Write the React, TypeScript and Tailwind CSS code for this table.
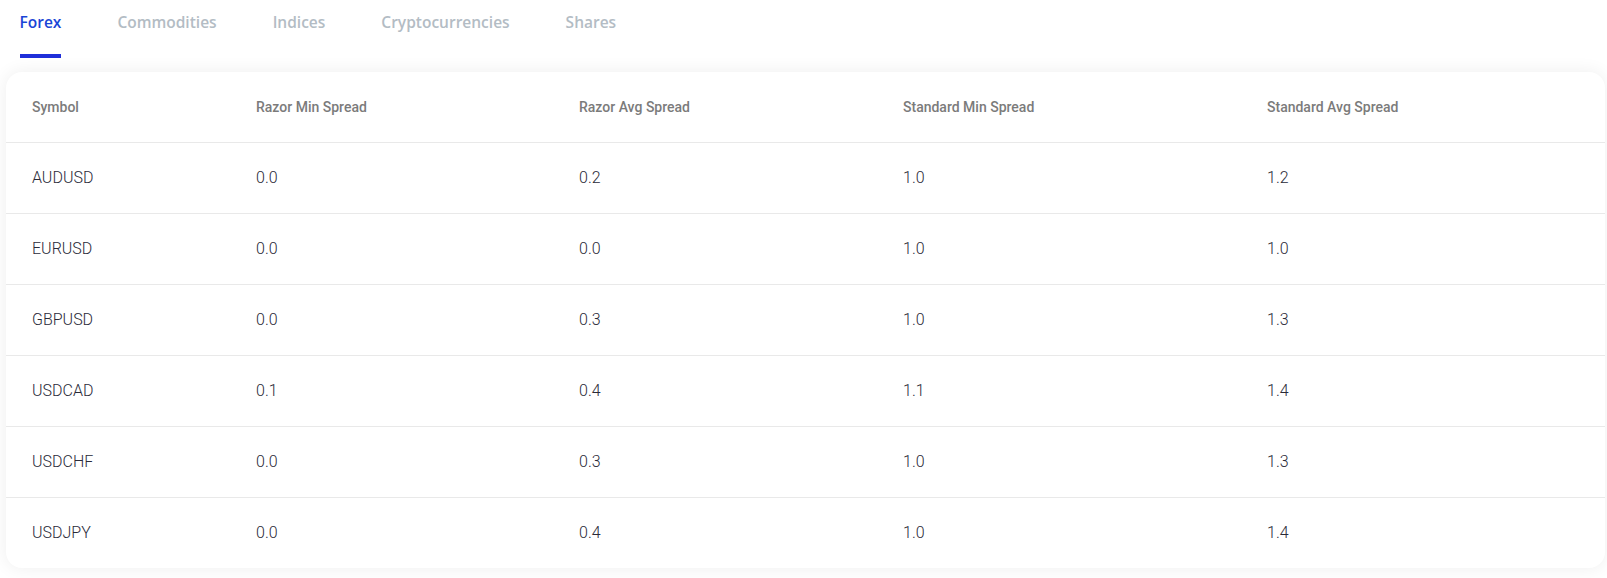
import { useState } from 'react';

const tabs = ['Forex', 'Commodities', 'Indices', 'Cryptocurrencies', 'Shares'];

const headers = ['Symbol', 'Razor Min Spread', 'Razor Avg Spread', 'Standard Min Spread', 'Standard Avg Spread'];

const rows = [
  ['AUDUSD', '0.0', '0.2', '1.0', '1.2'],
  ['EURUSD', '0.0', '0.0', '1.0', '1.0'],
  ['GBPUSD', '0.0', '0.3', '1.0', '1.3'],
  ['USDCAD', '0.1', '0.4', '1.1', '1.4'],
  ['USDCHF', '0.0', '0.3', '1.0', '1.3'],
  ['USDJPY', '0.0', '0.4', '1.0', '1.4'],
];

const cols = 'grid grid-cols-[224px_323px_324px_364px_1fr] pl-[26px] items-center';

export default function App() {
  const [active, setActive] = useState('Forex');

  return (
    <div className="w-full h-[578px] bg-white overflow-hidden font-['Roboto',sans-serif]">
      {/* Tabs */}
      <div className="flex gap-[56px] pl-[19.5px] font-['Open_Sans',sans-serif]">
        {tabs.map((t) => (
          <button
            key={t}
            onClick={() => setActive(t)}
            className={`flex flex-col pt-[10px] text-[15.5px] leading-6 font-semibold ${
              active === t ? 'text-[#1a45d6]' : 'text-[#b3bcc4]'
            }`}
          >
            {t}
            <span className={`mt-[20px] h-1 w-full ${active === t ? 'bg-[#1f2fd9]' : 'bg-transparent'}`} />
          </button>
        ))}
      </div>

      {/* Table card */}
      <div className="mt-[14px] ml-[6px] w-[1599px] bg-white rounded-2xl shadow-[0_0_18px_rgba(0,0,0,0.07)]">
        <div className={`${cols} h-[71px] border-b border-[#e9e9e9] text-[14px] font-medium text-[#7b7b7b]`}>
          {headers.map((h) => (
            <div key={h}>{h}</div>
          ))}
        </div>
        {rows.map((r, i) => (
          <div
            key={r[0]}
            className={`${cols} text-[16px] font-light text-[#2a2a38] ${
              i < rows.length - 1 ? 'h-[71px] border-b border-[#e9e9e9]' : 'h-[70px]'
            }`}
          >
            {r.map((c, j) => (
              <div key={j}>{c}</div>
            ))}
          </div>
        ))}
      </div>
    </div>
  );
}
